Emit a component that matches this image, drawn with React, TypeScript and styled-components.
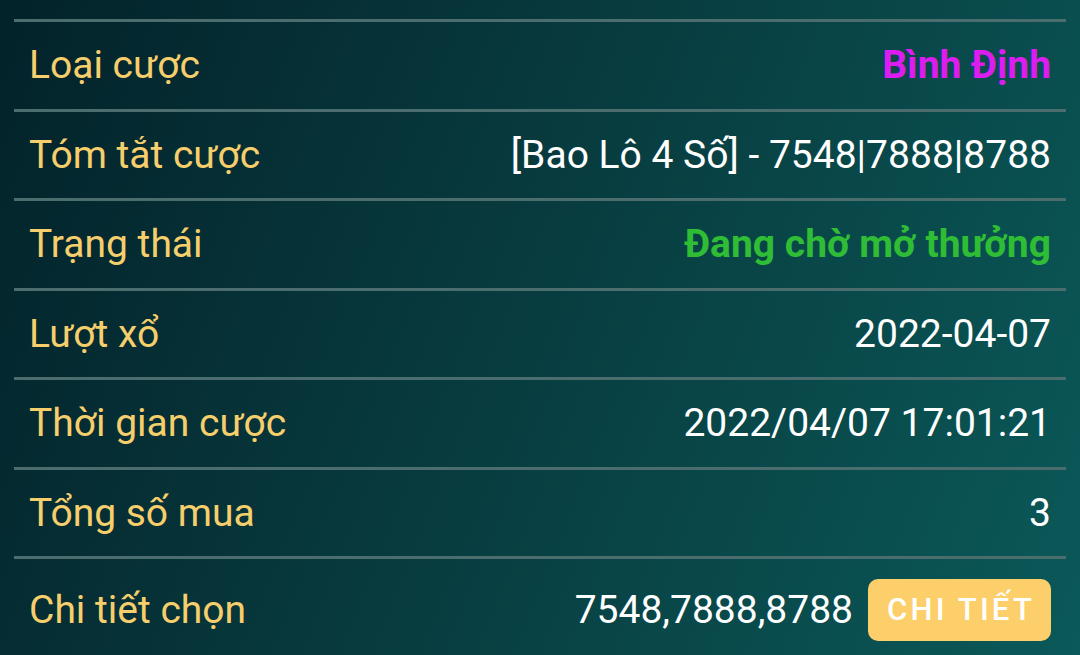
import React from 'react';
import styled, {createGlobalStyle} from 'styled-components';

const GlobalStyle = createGlobalStyle`
  html, body {
    margin: 0;
    padding: 0;
  }
  body {
    font-family: Roboto, "Liberation Sans", sans-serif;
  }
`;

const Screen = styled.div`
  width: 1080px;
  height: 655px;
  overflow: hidden;
  box-sizing: border-box;
  padding: 19px 14px 0;
  background: linear-gradient(112deg, #03222a 0%, #083d40 50%, #0b5959 100%);
`;

const Table = styled.div`
  display: flex;
  flex-direction: column;
`;

// last row holds the button, so it sits a bit lower than the others
const Row = styled.div<{$tall?: boolean}>`
  display: flex;
  align-items: center;
  justify-content: space-between;
  box-sizing: border-box;
  height: ${(p) => (p.$tall ? '98px' : '89.5px')};
  padding: ${(p) => (p.$tall ? '6px' : '0')} 15px 0;
  border-top: 3px solid #4c6d6e;
`;

const Label = styled.span`
  color: #f6cf6c;
  font-size: 39px;
  font-weight: 400;
`;

type Tone = 'plain' | 'magenta' | 'green';

const toneColor: Record<Tone, string> = {
  plain: '#ffffff',
  magenta: '#dc1cf0',
  green: '#2fbd36',
};

const Value = styled.span<{$tone?: Tone}>`
  display: flex;
  align-items: center;
  gap: 15px;
  color: ${(p) => toneColor[p.$tone ?? 'plain']};
  font-size: 39px;
  font-weight: ${(p) => (p.$tone && p.$tone !== 'plain' ? 700 : 400)};
`;

const DetailButton = styled.button`
  width: 183px;
  height: 62px;
  border: none;
  border-radius: 10px;
  background: #fdcf6b;
  color: #ffffff;
  font-family: Roboto, "Liberation Sans", sans-serif;
  font-size: 31px;
  font-weight: 500;
  letter-spacing: 3.2px;
  cursor: pointer;
  padding: 0 0 0 3px;
`;

const rows: {label: string; value: string; tone?: Tone}[] = [
  {label: 'Loại cược', value: 'Bình Định', tone: 'magenta'},
  {label: 'Tóm tắt cược', value: '[Bao Lô 4 Số] - 7548|7888|8788'},
  {label: 'Trạng thái', value: 'Đang chờ mở thưởng', tone: 'green'},
  {label: 'Lượt xổ', value: '2022-04-07'},
  {label: 'Thời gian cược', value: '2022/04/07 17:01:21'},
  {label: 'Tổng số mua', value: '3'},
];

export default function App() {
  return (
    <>
      <GlobalStyle />
      <Screen>
        <Table>
          {rows.map((r) => (
            <Row key={r.label}>
              <Label>{r.label}</Label>
              <Value $tone={r.tone}>{r.value}</Value>
            </Row>
          ))}
          <Row $tall>
            <Label>Chi tiết chọn</Label>
            <Value>
              7548,7888,8788
              <DetailButton>CHI TIẾT</DetailButton>
            </Value>
          </Row>
        </Table>
      </Screen>
    </>
  );
}
